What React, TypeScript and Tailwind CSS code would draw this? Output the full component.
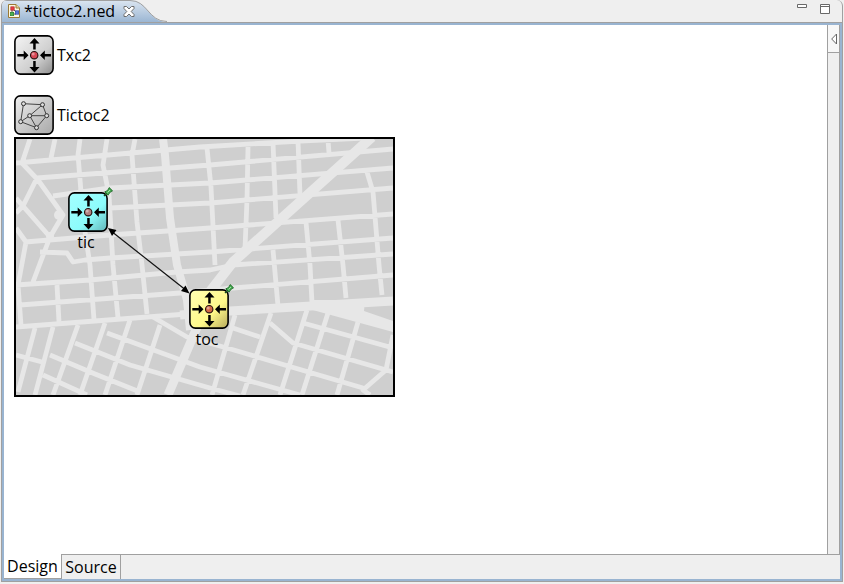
import React from "react";

const narrowStreets = [
  "M16 163L200 147L300 141L365 138",
  "M37 178L210 165L393 149",
  "M53 196L110 188L210 183L393 168",
  "M110 208L210 203L393 188",
  "M25 242L110 235L210 228L393 214",
  "M40 252L67 253L73 262L85 260L110 258L210 252L393 238",
  "M16 285L90 280L177 272L210 270L233 265L393 254",
  "M20 305L180 293L233 288L393 275",
  "M30 139L22 163",
  "M55 139L51 158",
  "M80 139L78 155L81 192",
  "M107 139L103 165L109 195L113 265L118 318",
  "M135 139L132 155L137 222L142 265L147 314",
  "M207 148L211 187L215 265",
  "M248 147L247 200L245 248",
  "M273 142L276 218",
  "M298 141L300 195",
  "M328 140L329 153",
  "M367 172L373 192L379 265L382 295",
  "M306 222L310 265L312 303",
  "M338 220L343 265L346 298",
  "M273 250L278 306",
  "M22 163L38 180L63 215L50 237L33 282",
  "M37 178L23 206L16 213",
  "M16 198L50 237",
  "M16 228L26 242L18 285L21 325",
  "M85 232L90 265L94 320",
  "M57 285L59 322",
  "M35 328L18 392",
  "M53 327L35 395",
  "M78 325L53 395",
  "M105 323L80 395",
  "M130 320L105 395",
  "M160 325L137 395",
  "M235 315L212 395",
  "M271 313L243 395",
  "M307 310L280 395",
  "M328 313L302 395",
  "M358 322L337 395",
  "M393 335L386 370L363 390L370 395",
  "M16 355L42 362",
  "M43 375L87 395",
  "M50 355L95 374L140 392",
  "M75 343L130 365L210 388L240 396",
  "M107 333L200 367L300 395",
  "M153 317L187 337L227 348L363 388",
  "M233 328L260 337",
  "M270 323L293 343L393 372",
  "M303 323L393 348",
];

function StreetMap() {
  return (
    <svg viewBox="16 139 377 256" className="block h-[256px] w-[377px]" aria-hidden="true">
      <rect x="16" y="139" width="377" height="256" fill="#cfcfcf" />
      <g fill="none" stroke="#e7e7e7" strokeLinejoin="round">
        <path d={narrowStreets.join("")} strokeWidth="4.8" />
        <path d="M163 139L165 155L170 218L177 265L187 300L190 330" strokeWidth="8" />
        <path d="M372 137L233 262L205 298" strokeWidth="10" />
        <path d="M16 327L187 314" strokeWidth="5" />
        <path d="M180 315L230 311L393 301" strokeWidth="9" />
        <path d="M198 325L168 395" strokeWidth="9" />
      </g>
      <path d="M313 300L365 300L364 311L393 321V332L309 309Z" fill="#e7e7e7" />
      <circle cx="59" cy="215" r="5" fill="#e7e7e7" />
      <circle cx="50" cy="236" r="4" fill="#e7e7e7" />
    </svg>
  );
}

function ModuleIcon({ id, light, base, dark, dot }: { id: string; light: string; base: string; dark: string; dot: string }) {
  return (
    <svg viewBox="0 0 40 40" className="block size-10 shrink-0" aria-hidden="true">
      <defs>
        <linearGradient id={id} x1="0" y1="0" x2="1" y2="1">
          <stop offset="0" stopColor={light} />
          <stop offset="0.6" stopColor={base} />
          <stop offset="1" stopColor={dark} />
        </linearGradient>
      </defs>
      <rect x="0.9" y="0.9" width="38.2" height="38.2" rx="5.5" fill={`url(#${id})`} stroke="#000" strokeWidth="1.6" />
      <g fill="#000">
        <path d="M20.500 3L15.500 8.500H19.200V14.500H21.700V8.500H25.500Z" />
        <path d="M20.500 37.500L15.500 32H19.200V26H21.700V32H25.500Z" />
        <path d="M14.500 20.300L9.700 15.500V19H3.300V21.600H9.700V25.100Z" />
        <path d="M26 20.300L30.800 15.500V19H37V21.600H30.800V25.100Z" />
      </g>
      <circle cx="20.2" cy="20.2" r="3.7" fill={dot} stroke="#25100f" strokeWidth="1.1" />
      <circle cx="19.2" cy="18.9" r="1.5" fill="#fff" opacity="0.4" />
    </svg>
  );
}

function NetworkIcon() {
  const nodes = [[9.5, 8.7], [28.5, 9.7], [15.7, 20.7], [32.7, 20.7], [6.7, 26.7], [22.5, 32.7]];
  return (
    <svg viewBox="0 0 40 40" className="block size-10 shrink-0" aria-hidden="true">
      <defs>
        <linearGradient id="network" x1="0" y1="0" x2="1" y2="1">
          <stop offset="0" stopColor="#efefef" />
          <stop offset="1" stopColor="#a8a8a8" />
        </linearGradient>
      </defs>
      <rect x="0.9" y="0.9" width="38.2" height="38.2" rx="5.5" fill="url(#network)" stroke="#000" strokeWidth="1.6" />
      <path d="M9.5 8.7L28.5 9.7L32.7 20.7L22.5 32.7L6.7 26.7ZM28.5 9.7L15.7 20.7H32.7M6.7 26.7L15.7 20.7L22.5 32.7" fill="none" stroke="#444" />
      {nodes.map(([x, y]) => (
        <circle key={`${x}-${y}`} cx={x} cy={y} r="2" fill="#ddd" stroke="#333" />
      ))}
    </svg>
  );
}

function Pin() {
  return (
    <svg viewBox="0 0 10 10" className="absolute -top-[5px] -right-[5px] size-[10px]" aria-hidden="true">
      <path d="M1 9L4 6" stroke="#174d1b" strokeWidth="1.5" />
      <path d="M1.800 4.800L5 8.200L6 6.500L8 4.600L9.500 3.800L6.200 0.600L5.400 2.200L3.500 4.200Z" fill="#48ae55" stroke="#17651f" strokeWidth="0.9" />
      <path d="M4.500 5.500L7 3" stroke="#a5e2a5" />
    </svg>
  );
}

function FileIcon() {
  return (
    <svg viewBox="0 0 12 14" className="block h-[14px] w-[12px]" aria-hidden="true">
      <path d="M0.5 0.5H8L11.5 4V13.5H0.5Z" fill="#fff8df" stroke="#9a7a35" />
      <path d="M8 0.5V4H11.5" fill="#ead59b" stroke="#9a7a35" />
      <path d="M4 5V10M4 10H8M5 5L8 8" stroke="#555" fill="none" />
      <rect x="2.8" y="2.8" width="3.4" height="3.4" fill="#e83c42" stroke="#a02634" strokeWidth="0.6" />
      <rect x="2.3" y="8.3" width="3.4" height="3.4" fill="#4bb34e" stroke="#21772a" strokeWidth="0.6" />
      <rect x="7.3" y="6.8" width="3.4" height="3.4" fill="#5877dc" stroke="#263e9d" strokeWidth="0.6" />
    </svg>
  );
}

function TitleBar() {
  return (
    <header className="relative flex h-[22px] shrink-0 items-center justify-between pr-3 pl-1.5">
      <svg viewBox="0 0 170 22" className="absolute top-0 left-0 h-[22px] w-[170px]" aria-hidden="true">
        <defs>
          <linearGradient id="tab" x1="0" y1="0" x2="0" y2="1">
            <stop offset="0" stopColor="#dce6f1" />
            <stop offset="1" stopColor="#9bb6d3" />
          </linearGradient>
        </defs>
        <path d="M0 22V3Q0 0 3 0H128C146 0 146 22 165 22Z" fill="url(#tab)" />
        <path d="M0 0.5H128C146 0.500 146 21.500 165 21.500" fill="none" stroke="#a0a0a0" />
      </svg>
      <div className="relative flex items-center">
        <FileIcon />
        <h1 className="ml-1 text-base leading-[22px]">*tictoc2.ned</h1>
        <button aria-label="Close" className="ml-2">
          <svg viewBox="0 0 12 11" className="block h-[11px] w-[12px]">
            <path d="M1 0.5H3.5L6 3L8.5 0.5H11V2.5L8.2 5.5L11 8.5V10.5H8.5L6 8L3.5 10.5H1V8.5L3.8 5.5L1 2.5Z" fill="#fff" stroke="#6d6d6d" />
          </svg>
        </button>
      </div>
      <div className="flex items-start gap-[13px] pb-1">
        <button aria-label="Minimize">
          <svg viewBox="0 0 10 10" className="block size-[10px]">
            <path d="M0.5 0.5H9.5V3.5H0.5Z" fill="#fff" stroke="#696969" />
          </svg>
        </button>
        <button aria-label="Maximize">
          <svg viewBox="0 0 10 10" className="block size-[10px]">
            <path d="M0.5 0.5H9.5V9.5H0.5ZM0.5 2.5H9.5" fill="#fff" stroke="#696969" />
          </svg>
        </button>
      </div>
    </header>
  );
}

function SubmodulesCanvas() {
  return (
    <section aria-label="Tictoc2 network" className="relative mt-0.5 w-fit border-2 border-black">
      <StreetMap />
      <svg viewBox="16 139 377 256" className="absolute inset-0 h-[256px] w-[377px]" aria-hidden="true">
        <path d="M111 231L187 291" stroke="#111" strokeWidth="1.2" />
        <path d="M108 228L116.500 230L112 236ZM189.500 293.500L181 291L185.500 285.500Z" fill="#000" />
      </svg>
      <div className="absolute top-[53px] left-[52px] w-10">
        <ModuleIcon id="tic" light="#a4ffff" base="#8cfcfc" dark="#62b4b8" dot="#b18080" />
        <Pin />
        <p className="pr-1 text-center text-base leading-5">tic</p>
      </div>
      <div className="absolute top-[150px] left-[173px] w-10">
        <ModuleIcon id="toc" light="#ffffb4" base="#fff98a" dark="#b8ab5c" dot="#d26745" />
        <Pin />
        <p className="pr-1 text-center text-base leading-5">toc</p>
      </div>
    </section>
  );
}

export default function App() {
  return (
    <div className="h-screen bg-[#efefef] pr-px pb-0.5 pl-px font-['Open_Sans','Noto_Sans',sans-serif] text-black">
      <div className="flex h-full flex-col overflow-hidden rounded-t-md border-x border-b border-[#a0a0a0]">
        <TitleBar />
        <div className="flex min-h-0 flex-1 flex-col border-t border-[#a0a0a0]">
          <div className="flex min-h-0 flex-1 flex-col border-2 border-[#99b4d1]">
            <div className="flex min-h-0 flex-1">
              <main className="min-w-0 flex-1 overflow-hidden bg-white pt-2.5 pl-2.5">
                <div className="flex items-center gap-[3px]">
                  <ModuleIcon id="txc" light="#f5f5f5" base="#d0d0d0" dark="#8c8c8c" dot="#d84856" />
                  <span className="text-base leading-5">Txc2</span>
                </div>
                <div className="mt-5 flex items-center gap-[3px]">
                  <NetworkIcon />
                  <span className="text-base leading-5">Tictoc2</span>
                </div>
                <SubmodulesCanvas />
              </main>
              <aside className="w-[13px] shrink-0 border-x border-[#a0a0a0]">
                <button aria-label="Show palette" className="flex h-7 w-full items-center justify-center border-b border-[#a0a0a0] bg-[#f7f7f7]">
                  <svg viewBox="0 0 6 12" className="h-3 w-1.5">
                    <path d="M5.500 1V11L0.700 6Z" fill="#fff" stroke="#666" />
                  </svg>
                </button>
              </aside>
            </div>
            <nav className="flex h-[25px] shrink-0 text-base leading-[23px]">
              <button className="w-[57px] border-b border-[#a0a0a0] bg-white text-center">Design</button>
              <div className="flex flex-1 border-t border-l border-[#a0a0a0]">
                <button className="w-[59px] border-r border-[#a0a0a0] text-center">Source</button>
              </div>
            </nav>
          </div>
        </div>
      </div>
    </div>
  );
}
